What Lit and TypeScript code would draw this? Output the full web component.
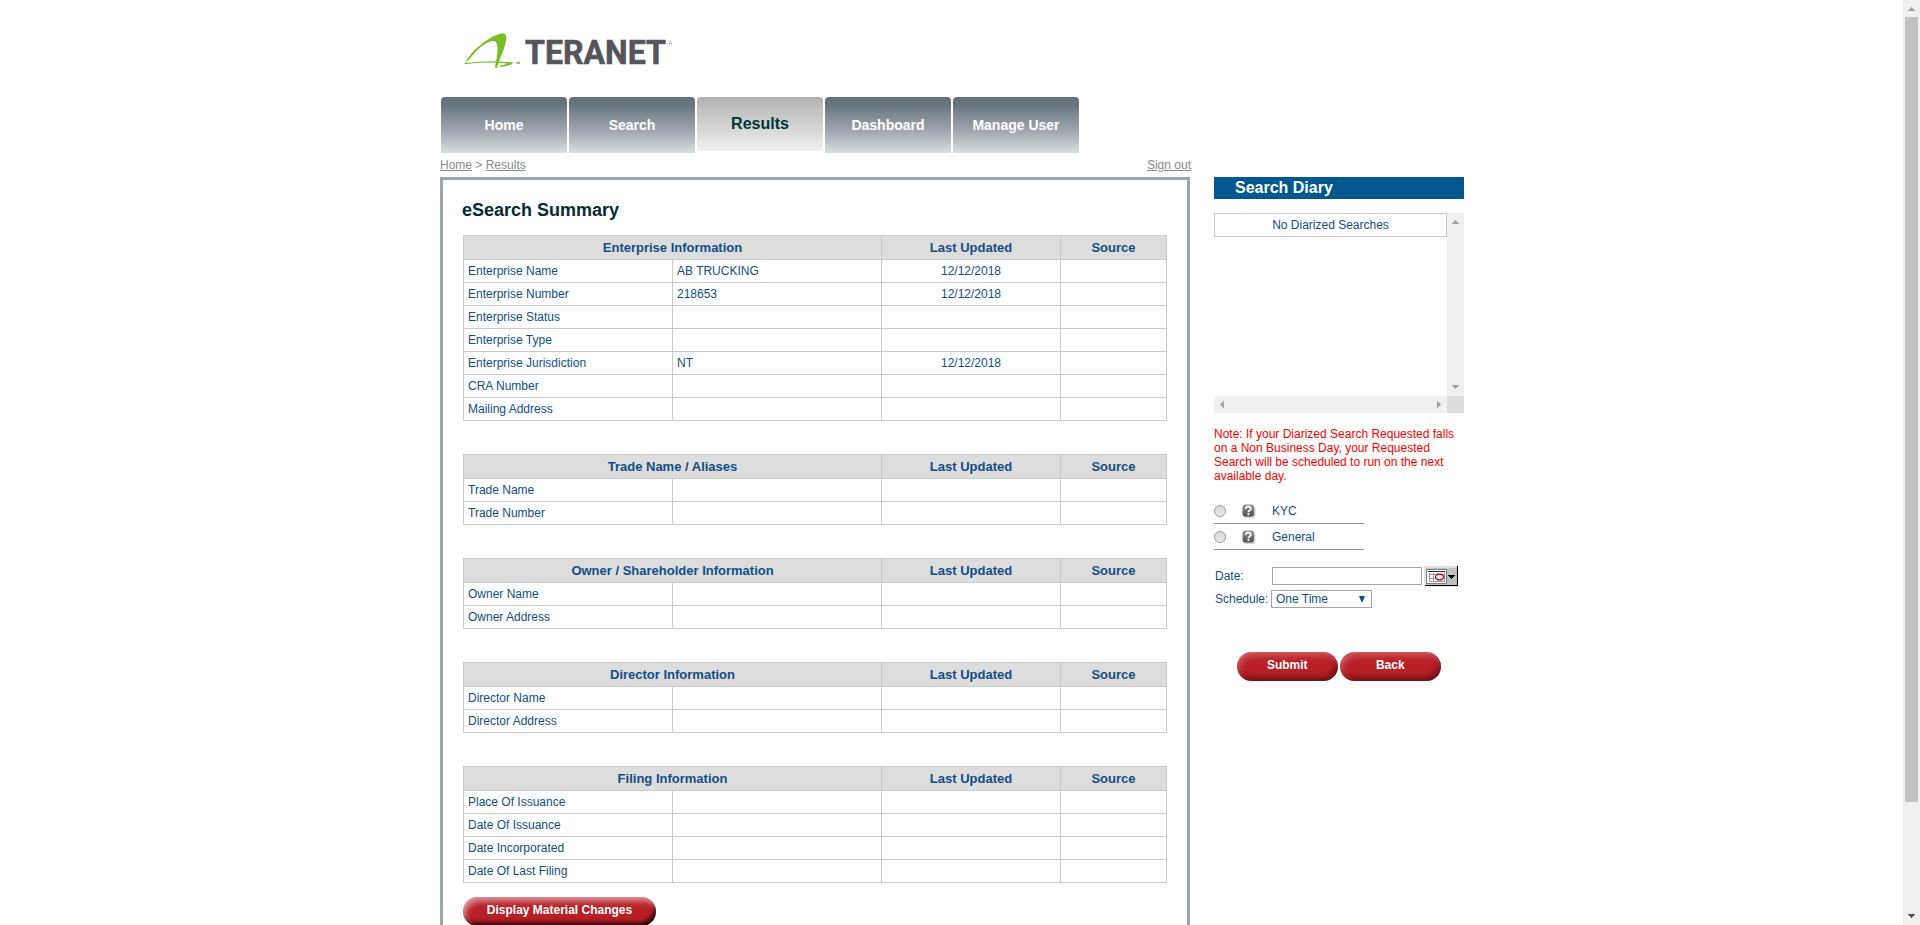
import { LitElement, html, css, svg } from "lit";
import { customElement, property } from "lit/decorators.js";

type Row = [string, string?, string?];
interface Section { title: string; rows: Row[]; }

const SECTIONS: Section[] = [
  {
    title: "Enterprise Information",
    rows: [
      ["Enterprise Name", "AB TRUCKING", "12/12/2018"],
      ["Enterprise Number", "218653", "12/12/2018"],
      ["Enterprise Status"],
      ["Enterprise Type"],
      ["Enterprise Jurisdiction", "NT", "12/12/2018"],
      ["CRA Number"],
      ["Mailing Address"],
    ],
  },
  { title: "Trade Name / Aliases", rows: [["Trade Name"], ["Trade Number"]] },
  { title: "Owner / Shareholder Information", rows: [["Owner Name"], ["Owner Address"]] },
  { title: "Director Information", rows: [["Director Name"], ["Director Address"]] },
  {
    title: "Filing Information",
    rows: [["Place Of Issuance"], ["Date Of Issuance"], ["Date Incorporated"], ["Date Of Last Filing"]],
  },
];

const ARROWS: Record<string, string> = {
  up: "M5 11h7v-1h-1v-1h-1v-1h-1v-1h-1v1h-1v1h-1v1h-1z",
  down: "M5 6h7v1h-1v1h-1v1h-1v1h-1v-1h-1v-1h-1v-1h-1z",
  left: "M10 5v7h-1v-1h-1v-1h-1v-1h-1v-1h1v-1h1v-1h1v-1z",
  right: "M7 5v7h1v-1h1v-1h1v-1h1v-1h-1v-1h-1v-1h-1v-1z",
};

const arrow = (dir: string, color = "#a3a3a3") => html`
  <svg width="17" height="17" viewBox="0 0 17 17" shape-rendering="crispEdges">
    ${svg`<path d=${ARROWS[dir]} fill=${color}></path>`}
  </svg>`;

@customElement("info-table")
export class InfoTable extends LitElement {
  @property({ attribute: false }) section!: Section;

  static styles = css`
    :host { display: block; }
    .table {
      display: grid;
      grid-template-columns: 208px 208px 178px 105px;
      grid-auto-rows: 22px;
      grid-template-rows: 23px;
      gap: 1px;
      padding: 1px;
      background: #c9c9c9;
      width: 702px;
    }
    .head {
      background: #dddddd;
      font-size: 13px;
      font-weight: bold;
      line-height: 23px;
      text-align: center;
    }
    .wide { grid-column: span 2; }
    .cell { background: #fff; line-height: 22px; padding-left: 4px; }
    .date { text-align: center; padding-left: 0; }
  `;

  render() {
    return html`<div class="table">
      <div class="head wide">${this.section.title}</div>
      <div class="head">Last Updated</div>
      <div class="head">Source</div>
      ${this.section.rows.map(([label, value, date]) => html`
        <div class="cell">${label}</div>
        <div class="cell">${value ?? ""}</div>
        <div class="cell date">${date ?? ""}</div>
        <div class="cell"></div>`)}
    </div>`;
  }
}

@customElement("app-root")
export class AppRoot extends LitElement {
  static styles = css`
    :host {
      display: flex;
      height: 925px;
      overflow: hidden;
      background: #fff;
      font: 12px/14px "Liberation Sans", Arial, sans-serif;
      color: #114e86;
    }
    svg { display: block; }
    .page { flex: 1; padding-left: 440px; }
    .logo { height: 97px; }
    .tabs { display: flex; gap: 2px; padding-left: 1px; height: 56px; }
    .tab {
      width: 126px;
      height: 56px;
      border-radius: 4px 4px 0 0;
      background: linear-gradient(#63717a 0, #6a777f 15%, #a0a6ad 60%, #d9dddf 100%);
      color: #fff;
      font-size: 14px;
      font-weight: bold;
      line-height: 56px;
      text-align: center;
    }
    .current {
      height: 54px;
      background: linear-gradient(#b2b2b2, #f0f0f0);
      color: #00363a;
      font-size: 16px;
      line-height: 53px;
    }
    .crumbs {
      display: flex;
      justify-content: space-between;
      width: 751px;
      height: 19px;
      padding-top: 5px;
      line-height: 14px;
      color: #8b8b8b;
    }
    .link { text-decoration: underline; }
    .columns { display: flex; gap: 24px; }
    .frame {
      box-sizing: border-box;
      width: 750px;
      height: 760px;
      border: 3px solid #9fa6ab;
      padding: 20px 20px 0;
    }
    .title {
      margin: 0 0 14px -1px;
      font-size: 18px;
      line-height: 21px;
      font-weight: bold;
      color: #062a33;
    }
    .stack { display: flex; flex-direction: column; gap: 33px; }
    .button {
      box-sizing: border-box;
      height: 29px;
      border-radius: 14.5px;
      background: #b91f27;
      box-shadow: inset 2px 4px 7px -1px rgba(255, 255, 255, 0.32),
        inset -3px -5px 6px -2px rgba(50, 0, 4, 0.65);
      color: #fff;
      font-weight: bold;
      line-height: 26px;
      text-align: center;
    }
    .wide {
      width: 193px;
      margin-top: 14px;
      box-shadow: inset 3px 5px 6px -1px rgba(255, 255, 255, 0.55),
        inset -3px -5px 5px -2px rgba(20, 0, 2, 0.95);
    }
    .side { width: 250px; }
    .diary {
      height: 22px;
      padding-left: 21px;
      width: 229px;
      background: #00588f;
      color: #fff;
      font-size: 16px;
      font-weight: bold;
      line-height: 21px;
    }
    .list {
      display: grid;
      grid-template-columns: 233px 17px;
      grid-template-rows: 183px 17px;
      margin: 14px 0 14px;
    }
    .empty {
      box-sizing: border-box;
      height: 24px;
      border: 1px solid #c9c9c9;
      line-height: 22px;
      text-align: center;
    }
    .bar { display: flex; justify-content: space-between; background: #f0f0f0; }
    .vertical { flex-direction: column; }
    .corner { background: #dcdcdc; }
    .note { color: #f00; white-space: nowrap; }
    .options { width: 150px; margin-top: 12px; }
    .option {
      display: grid;
      grid-template-columns: 28px 30px 1fr;
      align-items: center;
      height: 25px;
      border-bottom: 1px solid #8f8f8f;
    }
    .first { padding-top: 3px; }
    .radio {
      box-sizing: border-box;
      width: 12px;
      height: 12px;
      border: 1px solid #9c9c9c;
      border-radius: 50%;
      background: linear-gradient(#dadada, #e9e9e9);
    }
    .form { display: flex; flex-direction: column; padding-top: 16px; }
    .field { display: flex; height: 21px; }
    .label { width: 57px; padding-left: 1px; line-height: 21px; }
    .input {
      box-sizing: border-box;
      width: 150px;
      height: 18px;
      margin: 1px 2px 0 0;
      border: 1px solid #a5a5a5;
    }
    .schedule { height: 22px; padding-top: 2px; }
    .schedule .label { width: 56px; line-height: 20px; }
    .select {
      box-sizing: border-box;
      display: flex;
      justify-content: space-between;
      align-items: center;
      width: 101px;
      height: 18px;
      margin-top: 1px;
      padding: 0 6px 0 4px;
      border: 1px solid #a5a5a5;
    }
    .actions { display: flex; gap: 2.5px; padding: 41px 0 0 23px; }
    .action { width: 100.5px; }
    .scroll {
      width: 17px;
      display: flex;
      flex-direction: column;
      align-items: center;
      justify-content: space-between;
      background: #f0f0f0;
    }
    .thumb { width: 13px; height: 785px; background: #c1c1c1; }
    .rest { flex: 1; }
  `;

  private help() {
    return html`<svg width="15" height="16" viewBox="0 0 15 16">
      <defs>
        <linearGradient id="g" x1="0" y1="0" x2="0" y2="1">
          <stop offset="0" stop-color="#9a9a9a"></stop><stop offset="1" stop-color="#4c4c4c"></stop>
        </linearGradient>
      </defs>
      <rect x="1" y="2.5" width="12.5" height="12.5" rx="3.5" fill="#cfcfcf"></rect>
      <rect x="0.5" y="1.500" width="11.500" height="12" rx="3" fill="url(#g)"></rect>
      <path d="M3.600 5.800c.2-1.800 1.200-2.200 2.600-2.200 1.600 0 2.600.8 2.600 2.100 0 1.600-2.400 1.700-2.400 3.500" fill="none" stroke="#fff" stroke-width="1.700"></path>
      <rect x="5.500" y="10.200" width="1.900" height="1.900" fill="#fff"></rect>
    </svg>`;
  }

  private option(label: string, cls = "") {
    return html`<div class="option ${cls}">
      <span class="radio"></span>${this.help()}<span>${label}</span>
    </div>`;
  }

  render() {
    return html`
      <main class="page">
        <div class="logo">
          <svg width="250" height="97" viewBox="440 0 250 97">
            <path fill="#79bd28" d="M464.500 64C468 57 473 51 478 47C486 40 495 34 502 33.400C505.500 33.200 506.500 35 506.300 38C506 43 504 49 501.500 55C499.500 60 498 64 497 68L494.800 67.500C496 62 497.500 56 497.500 49C497.500 43 496 40.800 492.500 41C487 41.500 480 47 474.500 53C471 57 468 61 464.500 64Z"></path>
            <path fill="#79bd28" d="M464.500 63.300L478 61.800L495 61.300L513 62.300C513.500 64.500 507 66.600 499 67L500.500 65.500C504 65 506.500 64.200 506.500 63.600L495 62.600L478 62.800L464.500 64.200Z"></path>
            <ellipse cx="518.200" cy="63" rx="2" ry="1.100" fill="#79bd28"></ellipse>
            <text x="525" y="64" textLength="141" lengthAdjust="spacingAndGlyphs" font-family="Roboto" font-weight="700" font-size="33.700" fill="#55555b" stroke="#55555b" stroke-width="0.600">TERANET</text>
            <path d="M670.500 41v1M669.500 43v1M671.500 43v1" stroke="#77777c"></path>
          </svg>
        </div>
        <nav class="tabs">
          <div class="tab">Home</div>
          <div class="tab">Search</div>
          <div class="tab current">Results</div>
          <div class="tab">Dashboard</div>
          <div class="tab">Manage User</div>
        </nav>
        <div class="crumbs">
          <span><span class="link">Home</span> &gt; <span class="link">Results</span></span>
          <span class="link">Sign out</span>
        </div>
        <div class="columns">
          <section class="frame">
            <h1 class="title">eSearch Summary</h1>
            <div class="stack">
              ${SECTIONS.map((s) => html`<info-table .section=${s}></info-table>`)}
            </div>
            <div class="button wide">Display Material Changes</div>
          </section>
          <aside class="side">
            <div class="diary">Search Diary</div>
            <div class="list">
              <div class="empty">No Diarized Searches</div>
              <div class="bar vertical">${arrow("up")}${arrow("down")}</div>
              <div class="bar">${arrow("left")}${arrow("right")}</div>
              <div class="corner"></div>
            </div>
            <div class="note">
              Note: If your Diarized Search Requested falls<br />on a Non Business Day, your Requested<br />Search
              will be scheduled to run on the next<br />available day.
            </div>
            <div class="options">${this.option("KYC", "first")}${this.option("General")}</div>
            <div class="form">
              <div class="field">
                <span class="label">Date:</span>
                <span class="input"></span>
                <svg width="34" height="21" viewBox="0 0 34 21" shape-rendering="crispEdges">
                  <path d="M0 0h34v21H0z" fill="#e4e2de"></path>
                  <path d="M1 20h33V0h-1v19H1z" fill="#000"></path>
                  <path d="M2 2h31v17H2z" fill="#c0c0c0"></path>
                  <path d="M2.500 3.500h20v14h-20z" fill="#fff" stroke="#808080"></path>
                  <path d="M4 5h17v1H4z" fill="#003399"></path>
                  <path d="M5 8.500h16M5 12.500h16M5 15.500h16M5.500 7v9M9.500 7v9M13.500 7v9M17.500 7v9M20.500 7v9" stroke="#999"></path>
                  <ellipse cx="15.500" cy="11" rx="4" ry="2.800" fill="#fff" fill-opacity=".7" stroke="#c00" stroke-width="1.200" shape-rendering="auto"></ellipse>
                  <path d="M24 9h7v1h-1v1h-1v1h-1v1h-1v-1h-1v-1h-1v-1h-1z" fill="#000"></path>
                </svg>
              </div>
              <div class="field schedule">
                <span class="label">Schedule:</span>
                <div class="select">
                  <span>One Time</span>
                  <svg width="6" height="6" viewBox="0 0 6 6"><path d="M0 0h6L3.500 6h-1z" fill="#114e86"></path></svg>
                </div>
              </div>
            </div>
            <div class="actions">
              <div class="button action">Submit</div>
              <div class="button action">Back</div>
            </div>
          </aside>
        </div>
      </main>
      <div class="scroll">
        ${arrow("up")}
        <div class="thumb"></div>
        <div class="rest"></div>
        ${arrow("down", "#505050")}
      </div>
    `;
  }
}
